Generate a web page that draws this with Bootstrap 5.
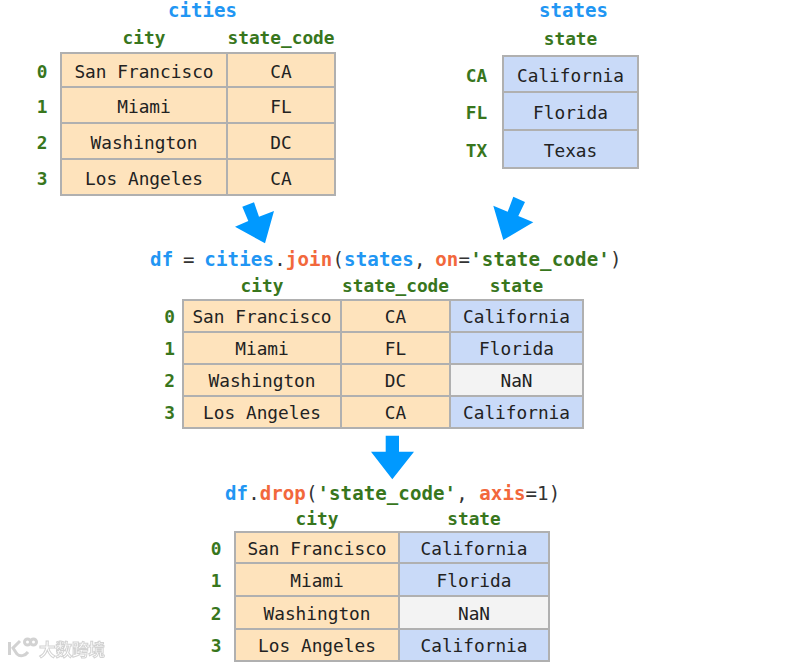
<!DOCTYPE html>
<html lang="en">
<head>
<meta charset="utf-8">
<title>cities.join(states)</title>
<link href="https://cdn.jsdelivr.net/npm/bootstrap@5.3.0/dist/css/bootstrap.min.css" rel="stylesheet">
<style>
body{background:#fff;margin:0;overflow:hidden}
.canvas-area{position:relative;width:800px;height:664px;overflow:hidden;font-family:"DejaVu Sans Mono","Liberation Mono",monospace}
.node{position:absolute}
.node-a{left:24px;top:23px}
.node-b{left:451px;top:22px}
.node-c{left:157px;top:272px}
.node-d{left:198px;top:506px}
.df-frame{table-layout:fixed;margin:0;width:auto;font-size:17.8px;line-height:1;color:#222;--bs-table-bg:transparent}
.df-frame,.df-frame>*,.df-frame>*>tr{border:0!important}
.df-frame th,.df-frame td{padding:0;text-align:center;vertical-align:middle;font-weight:400}
.df-frame tbody th,.df-frame tbody td{padding-top:2px}
.df-tall tbody th,.df-tall tbody td{padding-top:4px}
.df-frame thead th,.df-frame tbody th{color:#38761d;font-weight:700;border:0!important;background:transparent}
.df-frame tbody td{border:2px solid #b0b0b0!important}
.fill-o{--bs-table-bg:#fee3bc}
.fill-b{--bs-table-bg:#c9daf8}
.fill-g{--bs-table-bg:#f3f3f3}
.w-36{width:37px}.w-52{width:52px}.w-26{width:26px}.w-37{width:37px}
.w-166{width:166px}.w-108{width:108px}.w-135{width:135px}.w-158{width:158px}.w-109{width:109px}.w-133{width:133px}.w-164{width:164px}.w-150{width:150px}
.hd-30 th{height:30px}.hd-34 th{height:34px}.hd-28 th{height:28px}.hd-26 th{height:26px}
.h-34{height:34px}.h-36{height:36px}.h-38{height:38px}.h-31{height:31px}.h-32{height:32px}.h-33{height:33px}
.code-line{position:absolute;font-size:19.1px;font-weight:700;line-height:24px;white-space:pre;color:#2196f3}
.line-a{left:168px;top:0;line-height:22px}
.line-b{left:539px;top:0;line-height:22px}
.line-c{left:150px;top:248px;letter-spacing:.15px;word-spacing:-2px}
.line-d{left:225px;top:482px;letter-spacing:.06px}
.tok-f{color:#f2683c}
.tok-s{color:#38761d}
.tok-p{color:#333;font-weight:400}
.pointer{position:absolute;fill:#0099ff}
.pointer-a{left:235px;top:202px}
.pointer-b{left:493px;top:196px}
.pointer-c{left:371px;top:435px}
.mark-logo{position:absolute;left:7px;top:636px;fill:none;stroke:#d2d2d2;stroke-width:3;filter:blur(.5px)}
.mark-text{position:absolute;left:39px;top:639px;font-family:"Noto Sans CJK SC",sans-serif;font-size:16.5px;line-height:20px;font-weight:700;color:#fff;-webkit-text-stroke:1px #d2d2d2;white-space:nowrap;filter:blur(.5px)}
</style>
</head>
<body>
<div class="canvas-area">
  <div class="code-line line-a">cities</div>
  <div class="code-line line-b">states</div>

  <div class="node node-a">
    <table class="table table-bordered df-frame df-tall">
      <colgroup><col class="w-36"><col class="w-166"><col class="w-108"></colgroup>
      <thead><tr class="hd-30"><th></th><th>city</th><th>state_code</th></tr></thead>
      <tbody>
        <tr class="h-34"><th>0</th><td class="fill-o">San Francisco</td><td class="fill-o">CA</td></tr>
        <tr class="h-36"><th>1</th><td class="fill-o">Miami</td><td class="fill-o">FL</td></tr>
        <tr class="h-36"><th>2</th><td class="fill-o">Washington</td><td class="fill-o">DC</td></tr>
        <tr class="h-36"><th>3</th><td class="fill-o">Los Angeles</td><td class="fill-o">CA</td></tr>
      </tbody>
    </table>
  </div>

  <div class="node node-b">
    <table class="table table-bordered df-frame df-tall">
      <colgroup><col class="w-52"><col class="w-135"></colgroup>
      <thead><tr class="hd-34"><th></th><th>state</th></tr></thead>
      <tbody>
        <tr class="h-36"><th>CA</th><td class="fill-b">California</td></tr>
        <tr class="h-38"><th>FL</th><td class="fill-b">Florida</td></tr>
        <tr class="h-38"><th>TX</th><td class="fill-b">Texas</td></tr>
      </tbody>
    </table>
  </div>

  <svg class="pointer pointer-a" width="40" height="42" viewBox="235 202 40 42"><polygon points="242.3,206.7 254,202.3 259,216.7 274,211 265,243.3 235,226.7 248.3,221"/></svg>
  <svg class="pointer pointer-b" width="41" height="45" viewBox="493 196 41 45"><polygon points="513.3,196.7 525,202 518.3,216 533.3,222.3 503.3,240 493.3,205.7 507.7,211.7"/></svg>

  <div class="code-line line-c">df <span class="tok-p">=</span> cities<span class="tok-p">.</span><span class="tok-f">join</span><span class="tok-p">(</span>states<span class="tok-p">,</span> <span class="tok-f">on</span><span class="tok-p">=</span><span class="tok-s">'state_code'</span><span class="tok-p">)</span></div>

  <div class="node node-c">
    <table class="table table-bordered df-frame">
      <colgroup><col class="w-26"><col class="w-158"><col class="w-109"><col class="w-133"></colgroup>
      <thead><tr class="hd-28"><th></th><th>city</th><th>state_code</th><th>state</th></tr></thead>
      <tbody>
        <tr class="h-32"><th>0</th><td class="fill-o">San Francisco</td><td class="fill-o">CA</td><td class="fill-b">California</td></tr>
        <tr class="h-32"><th>1</th><td class="fill-o">Miami</td><td class="fill-o">FL</td><td class="fill-b">Florida</td></tr>
        <tr class="h-32"><th>2</th><td class="fill-o">Washington</td><td class="fill-o">DC</td><td class="fill-g">NaN</td></tr>
        <tr class="h-32"><th>3</th><td class="fill-o">Los Angeles</td><td class="fill-o">CA</td><td class="fill-b">California</td></tr>
      </tbody>
    </table>
  </div>

  <svg class="pointer pointer-c" width="44" height="45" viewBox="371 435 44 45"><polygon points="385.7,435.7 399,435.7 399,451.7 414,451.7 392.3,479.3 371,451.7 385.7,451.7"/></svg>

  <div class="code-line line-d">df<span class="tok-p">.</span><span class="tok-f">drop</span><span class="tok-p">(</span><span class="tok-s">'state_code'</span><span class="tok-p">,</span> <span class="tok-f">axis</span><span class="tok-p">=1)</span></div>

  <div class="node node-d">
    <table class="table table-bordered df-frame">
      <colgroup><col class="w-37"><col class="w-164"><col class="w-150"></colgroup>
      <thead><tr class="hd-26"><th></th><th>city</th><th>state</th></tr></thead>
      <tbody>
        <tr class="h-31"><th>0</th><td class="fill-o">San Francisco</td><td class="fill-b">California</td></tr>
        <tr class="h-33"><th>1</th><td class="fill-o">Miami</td><td class="fill-b">Florida</td></tr>
        <tr class="h-33"><th>2</th><td class="fill-o">Washington</td><td class="fill-g">NaN</td></tr>
        <tr class="h-32"><th>3</th><td class="fill-o">Los Angeles</td><td class="fill-b">California</td></tr>
      </tbody>
    </table>
  </div>

  <svg class="mark-logo" width="32" height="24" viewBox="0 0 32 24"><path d="M2.5 6v13M13 5 6 12l4 6c3 3 8 2 11-2"/><circle cx="20.5" cy="6" r="3"/><circle cx="26.5" cy="6" r="3"/></svg>
  <div class="mark-text">大数跨境</div>
</div>
<script src="https://cdn.jsdelivr.net/npm/bootstrap@5.3.0/dist/js/bootstrap.bundle.min.js"></script>
</body>
</html>
